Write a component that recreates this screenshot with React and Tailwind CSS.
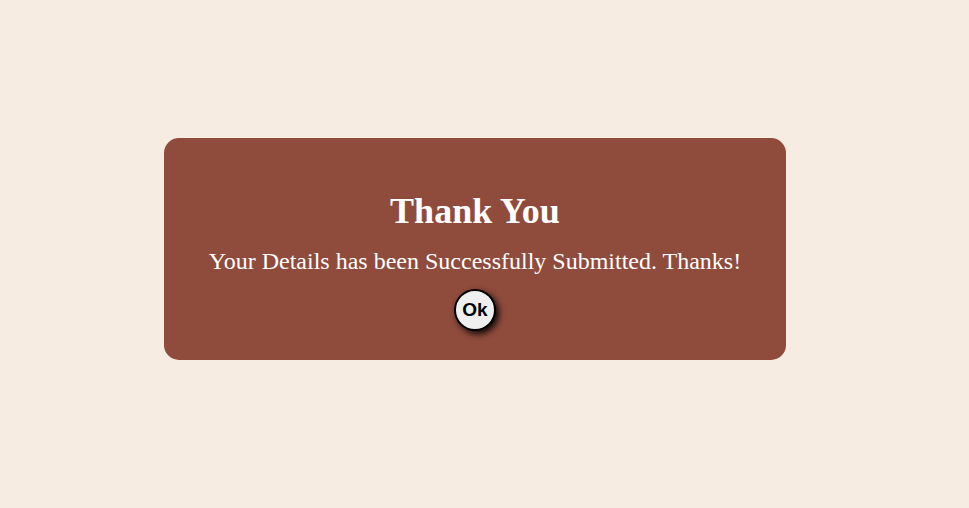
export default function App() {
  return (
    <div className="min-h-[508px] bg-[#f7ece2] flex justify-center pt-[138px] pr-[19px]">
      <div className="w-[622px] h-[222px] rounded-[15px] bg-[#8f4b3c] flex flex-col items-center pt-[55px] text-white font-['Liberation_Serif',serif]">
        <h1 className="text-[36px] font-bold leading-none">Thank You</h1>
        <p className="text-[24px] leading-none mt-[20px]">Your Details has been Successfully Submitted. Thanks!</p>
        <button
          type="button"
          className="mt-[16px] w-[42px] h-[42px] rounded-full border-2 border-black bg-[#efefef] text-black text-[19px] font-bold font-['Liberation_Sans',sans-serif] shadow-[3px_3px_6px_rgba(0,0,0,0.9)] flex items-center justify-center"
        >
          Ok
        </button>
      </div>
    </div>
  );
}
